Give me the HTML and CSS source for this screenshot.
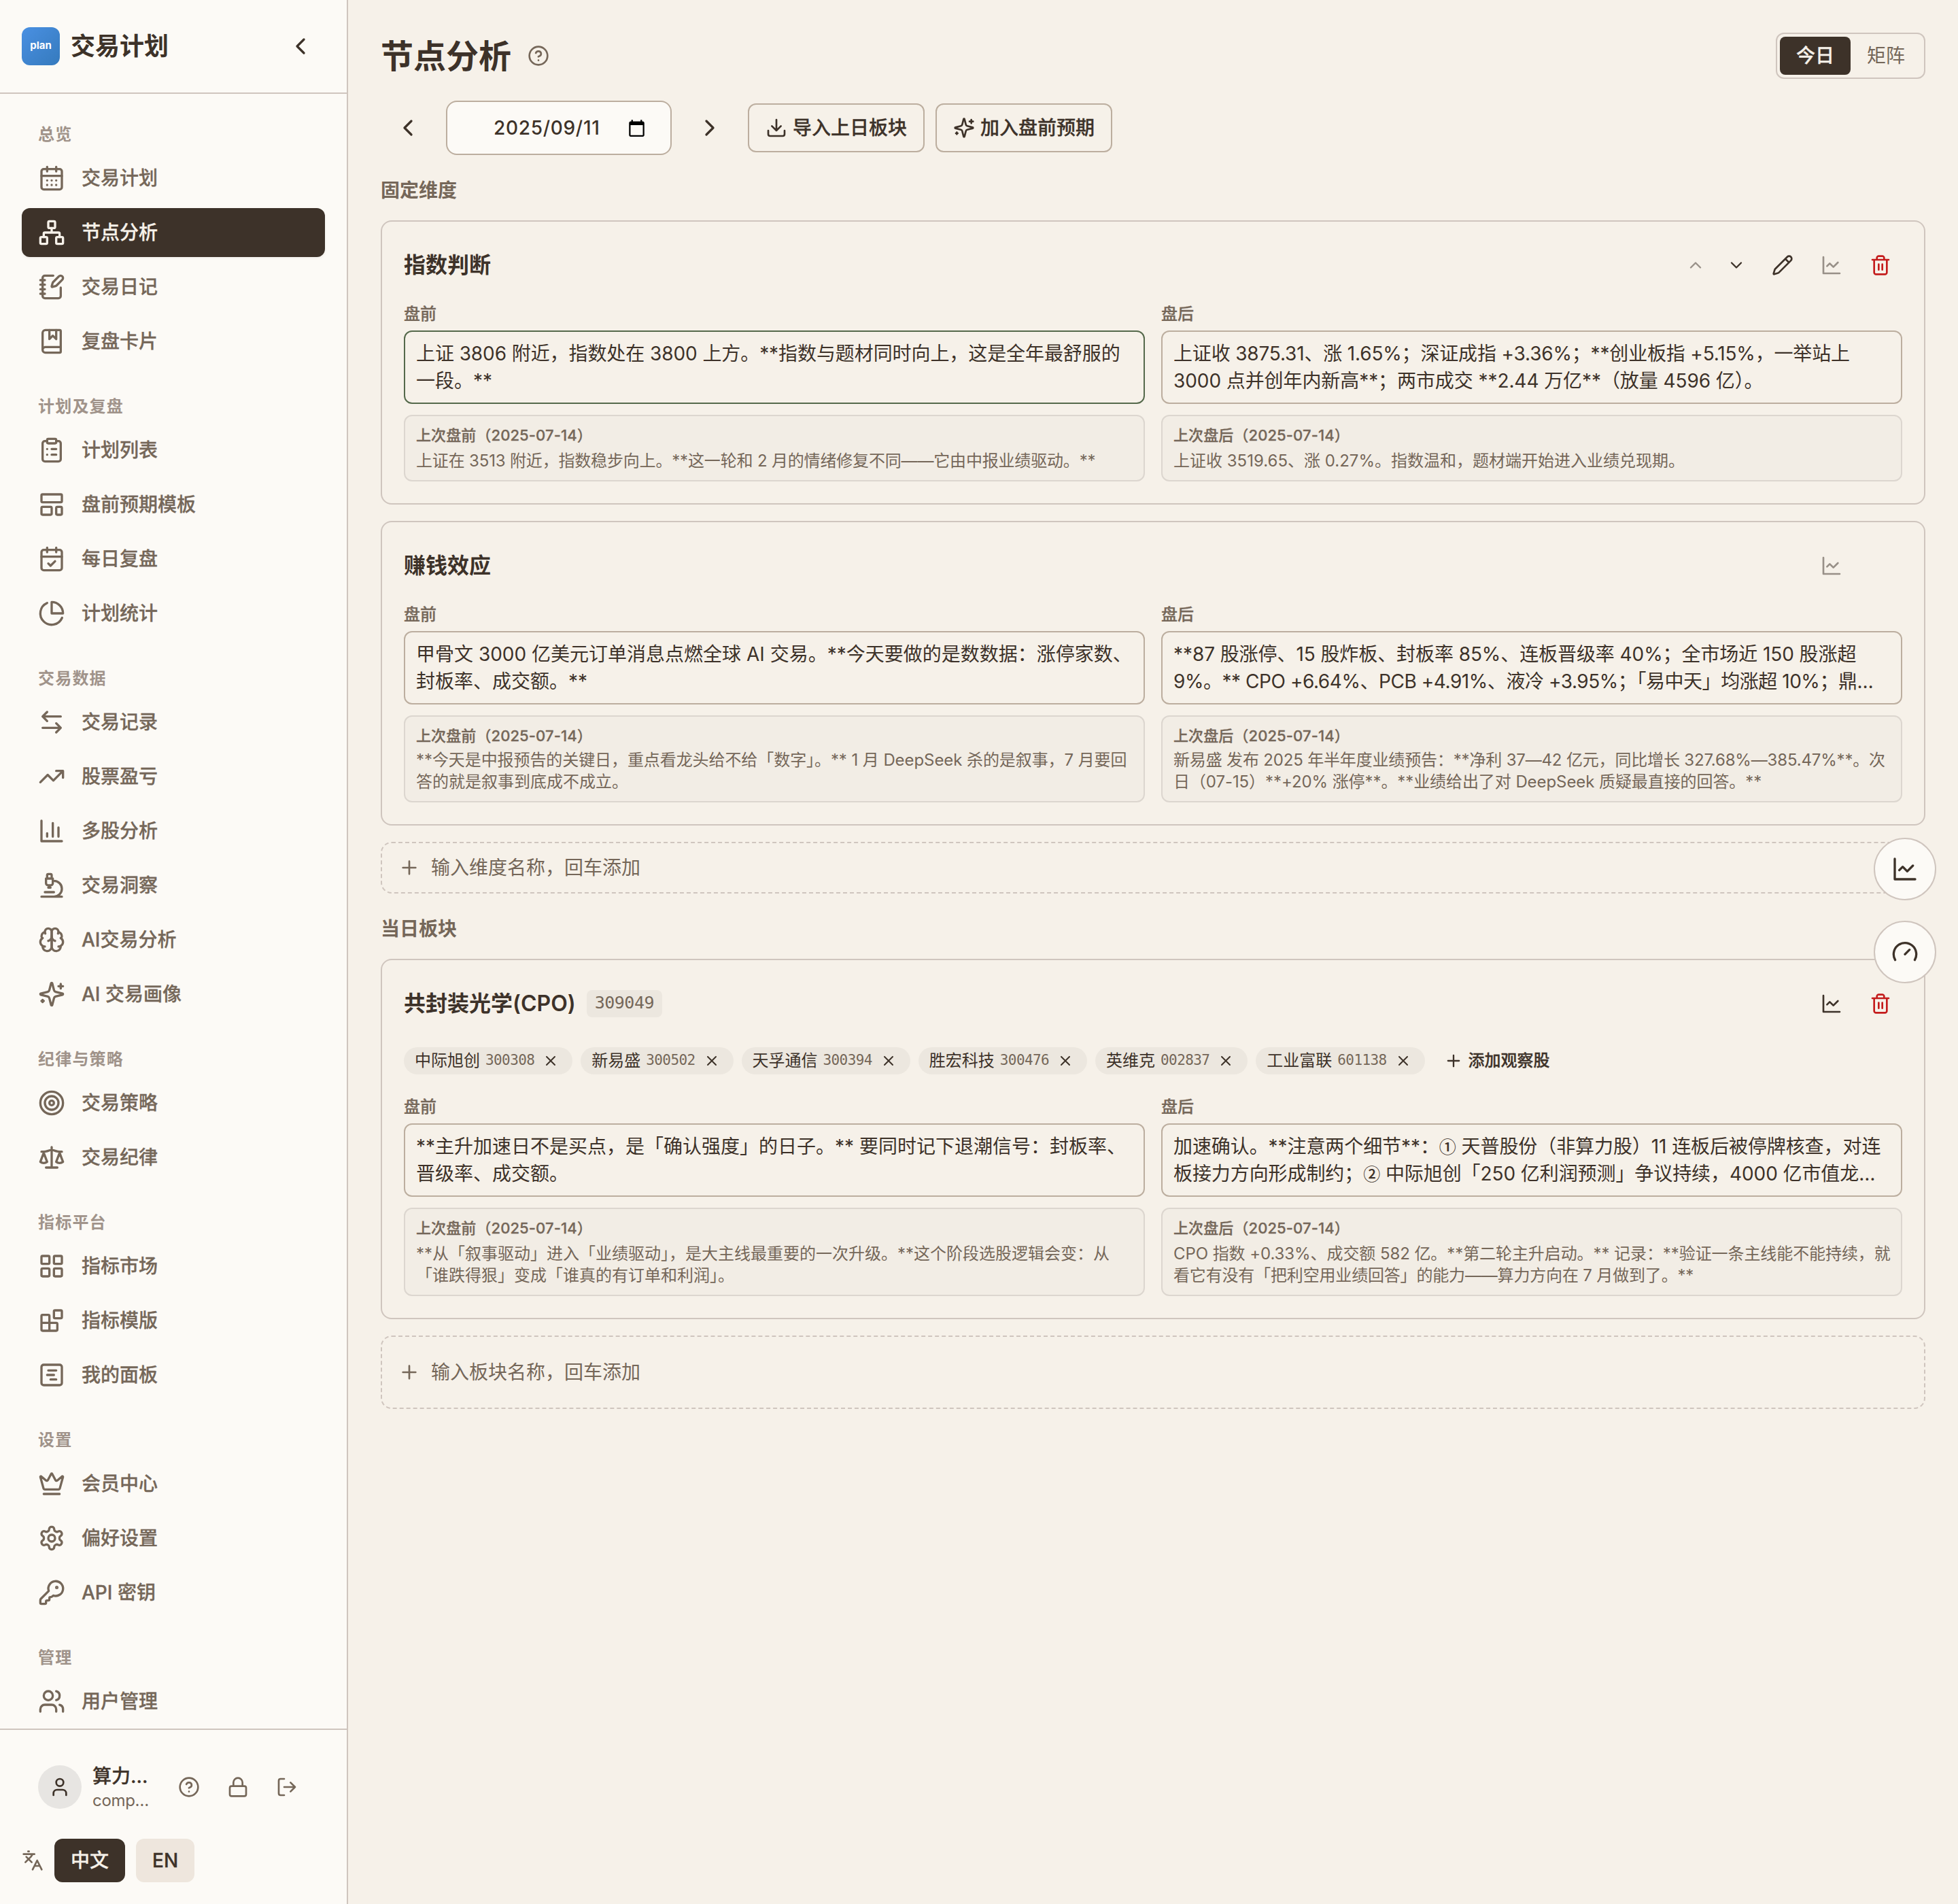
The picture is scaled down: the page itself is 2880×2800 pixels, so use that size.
FILE: index.html
```html
<!DOCTYPE html>
<html lang="zh-CN">
<head>
<meta charset="utf-8">
<title>交易计划 · 节点分析</title>
<link rel="stylesheet" href="styles.css">
</head>
<body>
<svg class="sprite" aria-hidden="true">
  <symbol id="calendar-days" viewBox="0 0 24 24"><path d="M8 2v4M16 2v4M3 10h18M8 14h.01M12 14h.01M16 14h.01M8 18h.01M12 18h.01M16 18h.01"/><rect width="18" height="18" x="3" y="4" rx="2"/></symbol>
  <symbol id="network" viewBox="0 0 24 24"><rect x="16" y="16" width="6" height="6" rx="1"/><rect x="2" y="16" width="6" height="6" rx="1"/><rect x="9" y="2" width="6" height="6" rx="1"/><path d="M5 16v-3a1 1 0 0 1 1-1h12a1 1 0 0 1 1 1v3M12 12V8"/></symbol>
  <symbol id="notebook-pen" viewBox="0 0 24 24"><path d="M13.4 2H6a2 2 0 0 0-2 2v16a2 2 0 0 0 2 2h12a2 2 0 0 0 2-2v-7.4M2 6h4M2 10h4M2 14h4M2 18h4"/><path d="M21.378 5.626a1 1 0 1 0-3.004-3.004l-5.01 5.012a2 2 0 0 0-.506.854l-.837 2.87a.5.5 0 0 0 .62.62l2.87-.837a2 2 0 0 0 .854-.506z"/></symbol>
  <symbol id="book-marked" viewBox="0 0 24 24"><path d="M10 2v8l3-3 3 3V2"/><path d="M4 19.5v-15A2.5 2.5 0 0 1 6.5 2H19a1 1 0 0 1 1 1v18a1 1 0 0 1-1 1H6.5a1 1 0 0 1 0-5H20"/></symbol>
  <symbol id="clipboard-list" viewBox="0 0 24 24"><rect width="8" height="4" x="8" y="2" rx="1"/><path d="M16 4h2a2 2 0 0 1 2 2v14a2 2 0 0 1-2 2H6a2 2 0 0 1-2-2V6a2 2 0 0 1 2-2h2M12 11h4M12 16h4M8 11h.01M8 16h.01"/></symbol>
  <symbol id="layout-template" viewBox="0 0 24 24"><rect width="18" height="7" x="3" y="3" rx="1"/><rect width="9" height="7" x="3" y="14" rx="1"/><rect width="5" height="7" x="16" y="14" rx="1"/></symbol>
  <symbol id="calendar-check" viewBox="0 0 24 24"><path d="M8 2v4M16 2v4M3 10h18M9 16l2 2 4-4"/><rect width="18" height="18" x="3" y="4" rx="2"/></symbol>
  <symbol id="pie-chart" viewBox="0 0 24 24"><path d="M21.21 15.89A10 10 0 1 1 8 2.83"/><path d="M22 12A10 10 0 0 0 12 2v10z"/></symbol>
  <symbol id="arrow-left-right" viewBox="0 0 24 24"><path d="M8 3 4 7l4 4M4 7h16M16 21l4-4-4-4M20 17H4"/></symbol>
  <symbol id="trending-up" viewBox="0 0 24 24"><path d="M22 7l-8.500 8.500-5-5L2 17M16 7h6v6"/></symbol>
  <symbol id="bar-chart" viewBox="0 0 24 24"><path d="M3 3v18h18M18 17V9M13 17V5M8 17v-3"/></symbol>
  <symbol id="microscope" viewBox="0 0 24 24"><path d="M6 18h8M3 22h18M14 22a7 7 0 1 0 0-14h-1M9 14h2M9 12a2 2 0 0 1-2-2V6h6v4a2 2 0 0 1-2 2ZM12 6V3a1 1 0 0 0-1-1H9a1 1 0 0 0-1 1v3"/></symbol>
  <symbol id="brain" viewBox="0 0 24 24"><path d="M12 5a3 3 0 1 0-5.997.125 4 4 0 0 0-2.526 5.770 4 4 0 0 0 .556 6.588A4 4 0 1 0 12 18Z"/><path d="M12 5a3 3 0 1 1 5.997.125 4 4 0 0 1 2.526 5.770 4 4 0 0 1-.556 6.588A4 4 0 1 1 12 18Z"/><path d="M15 13a4.500 4.500 0 0 1-3-4 4.500 4.500 0 0 1-3 4M17.599 6.500a3 3 0 0 0 .399-1.375M6.003 5.125A3 3 0 0 0 6.401 6.500M3.477 10.896a4 4 0 0 1 .585-.396M19.938 10.500a4 4 0 0 1 .585.396M6 18a4 4 0 0 1-1.967-.516M19.967 17.484A4 4 0 0 1 18 18"/></symbol>
  <symbol id="sparkles" viewBox="0 0 24 24"><path d="M9.937 15.5A2 2 0 0 0 8.5 14.063l-6.135-1.582a.5.5 0 0 1 0-.962L8.5 9.936A2 2 0 0 0 9.937 8.5l1.582-6.135a.5.5 0 0 1 .963 0L14.063 8.5A2 2 0 0 0 15.5 9.937l6.135 1.581a.5.5 0 0 1 0 .964L15.5 14.063a2 2 0 0 0-1.437 1.437l-1.582 6.135a.5.5 0 0 1-.963 0zM20 3v4M22 5h-4M4 17v2M5 18H3"/></symbol>
  <symbol id="target" viewBox="0 0 24 24"><circle cx="12" cy="12" r="10"/><circle cx="12" cy="12" r="6"/><circle cx="12" cy="12" r="2"/></symbol>
  <symbol id="scale" viewBox="0 0 24 24"><path d="m16 16 3-8 3 8c-.87.65-1.92 1-3 1s-2.130-.35-3-1ZM2 16l3-8 3 8c-.87.65-1.920 1-3 1s-2.130-.35-3-1ZM7 21h10M12 3v18M3 7h2c2 0 5-1 7-2 2 1 5 2 7 2h2"/></symbol>
  <symbol id="layout-grid" viewBox="0 0 24 24"><rect width="7" height="7" x="3" y="3" rx="1"/><rect width="7" height="7" x="14" y="3" rx="1"/><rect width="7" height="7" x="14" y="14" rx="1"/><rect width="7" height="7" x="3" y="14" rx="1"/></symbol>
  <symbol id="blocks" viewBox="0 0 24 24"><rect width="7" height="7" x="14" y="3" rx="1"/><path d="M10 21V8a1 1 0 0 0-1-1H4a1 1 0 0 0-1 1v12a1 1 0 0 0 1 1h12a1 1 0 0 0 1-1v-5a1 1 0 0 0-1-1H3"/></symbol>
  <symbol id="gantt" viewBox="0 0 24 24"><rect width="18" height="18" x="3" y="3" rx="2"/><path d="M9 8h7M8 12h6M11 16h5"/></symbol>
  <symbol id="crown" viewBox="0 0 24 24"><path d="M11.562 3.266a.5.5 0 0 1 .876 0L15.39 8.87a1 1 0 0 0 1.516.294L21.183 5.5a.5.5 0 0 1 .798.519l-2.834 10.246a1 1 0 0 1-.956.734H5.81a1 1 0 0 1-.957-.734L2.02 6.02a.5.5 0 0 1 .798-.519l4.276 3.664a1 1 0 0 0 1.516-.294zM5 21h14"/></symbol>
  <symbol id="settings" viewBox="0 0 24 24"><path d="M12.22 2h-.44a2 2 0 0 0-2 2v.18a2 2 0 0 1-1 1.73l-.43.25a2 2 0 0 1-2 0l-.15-.08a2 2 0 0 0-2.73.73l-.22.38a2 2 0 0 0 .73 2.73l.15.1a2 2 0 0 1 1 1.72v.51a2 2 0 0 1-1 1.74l-.15.09a2 2 0 0 0-.73 2.73l.22.38a2 2 0 0 0 2.73.73l.15-.08a2 2 0 0 1 2 0l.43.25a2 2 0 0 1 1 1.73V20a2 2 0 0 0 2 2h.44a2 2 0 0 0 2-2v-.18a2 2 0 0 1 1-1.73l.43-.25a2 2 0 0 1 2 0l.15.08a2 2 0 0 0 2.73-.73l.22-.39a2 2 0 0 0-.73-2.73l-.15-.08a2 2 0 0 1-1-1.74v-.5a2 2 0 0 1 1-1.74l.15-.09a2 2 0 0 0 .73-2.73l-.22-.38a2 2 0 0 0-2.73-.73l-.15.08a2 2 0 0 1-2 0l-.43-.25a2 2 0 0 1-1-1.73V4a2 2 0 0 0-2-2z"/><circle cx="12" cy="12" r="3"/></symbol>
  <symbol id="key" viewBox="0 0 24 24"><path d="M2.586 17.414A2 2 0 0 0 2 18.828V21a1 1 0 0 0 1 1h3a1 1 0 0 0 1-1v-1a1 1 0 0 1 1-1h1a1 1 0 0 0 1-1v-1a1 1 0 0 1 1-1h.172a2 2 0 0 0 1.414-.586l.814-.814a6.5 6.5 0 1 0-4-4z"/><circle cx="16.5" cy="7.5" r=".5" fill="currentColor"/></symbol>
  <symbol id="users" viewBox="0 0 24 24"><path d="M16 21v-2a4 4 0 0 0-4-4H6a4 4 0 0 0-4 4v2M22 21v-2a4 4 0 0 0-3-3.87M16 3.13a4 4 0 0 1 0 7.75"/><circle cx="9" cy="7" r="4"/></symbol>
  <symbol id="user" viewBox="0 0 24 24"><path d="M19 21v-2a4 4 0 0 0-4-4H9a4 4 0 0 0-4 4v2"/><circle cx="12" cy="7" r="4"/></symbol>
  <symbol id="help" viewBox="0 0 24 24"><circle cx="12" cy="12" r="10"/><path d="M9.09 9a3 3 0 0 1 5.83 1c0 2-3 3-3 3M12 17h.01"/></symbol>
  <symbol id="lock" viewBox="0 0 24 24"><rect width="18" height="11" x="3" y="11" rx="2"/><path d="M7 11V7a5 5 0 0 1 10 0v4"/></symbol>
  <symbol id="log-out" viewBox="0 0 24 24"><path d="M9 21H5a2 2 0 0 1-2-2V5a2 2 0 0 1 2-2h4M16 17l5-5-5-5M21 12H9"/></symbol>
  <symbol id="languages" viewBox="0 0 24 24"><path d="m5 8 6 6M4 14l6-6 2-3M2 5h12M7 2h1M22 22l-5-10-5 10M14 18h6"/></symbol>
  <symbol id="chevron-left" viewBox="0 0 24 24"><path d="m15 18-6-6 6-6"/></symbol>
  <symbol id="chevron-right" viewBox="0 0 24 24"><path d="m9 18 6-6-6-6"/></symbol>
  <symbol id="chevron-up" viewBox="0 0 24 24"><path d="m18 15-6-6-6 6"/></symbol>
  <symbol id="chevron-down" viewBox="0 0 24 24"><path d="m6 9 6 6 6-6"/></symbol>
  <symbol id="download" viewBox="0 0 24 24"><path d="M21 15v4a2 2 0 0 1-2 2H5a2 2 0 0 1-2-2v-4M7 10l5 5 5-5M12 15V3"/></symbol>
  <symbol id="pencil" viewBox="0 0 24 24"><path d="M21.174 6.812a1 1 0 0 0-3.986-3.987L3.842 16.174a2 2 0 0 0-.5.83l-1.321 4.352a.5.5 0 0 0 .623.622l4.353-1.320a2 2 0 0 0 .830-.497zM15 5l4 4"/></symbol>
  <symbol id="line-chart" viewBox="0 0 24 24"><path d="M3 3v18h18M19 9l-5 5-4-4-3 3"/></symbol>
  <symbol id="trash" viewBox="0 0 24 24"><path d="M3 6h18M19 6v14c0 1-1 2-2 2H7c-1 0-2-1-2-2V6M8 6V4c0-1 1-2 2-2h4c1 0 2 1 2 2v2M10 11v6M14 11v6"/></symbol>
  <symbol id="plus" viewBox="0 0 24 24"><path d="M5 12h14M12 5v14"/></symbol>
  <symbol id="x" viewBox="0 0 24 24"><path d="M18 6 6 18M6 6l12 12"/></symbol>
  <symbol id="gauge" viewBox="0 0 24 24"><path d="m12 14 4-4M3.340 19a10 10 0 1 1 17.320 0"/></symbol>
  <symbol id="date-picker" viewBox="0 0 24 24"><path fill="#000" stroke="none" d="M20 3h-1V1h-2v2H7V1H5v2H4c-1.100 0-2 .9-2 2v16c0 1.100.9 2 2 2h16c1.100 0 2-.9 2-2V5c0-1.100-.9-2-2-2zm0 18H4V8h16v13z"/></symbol>
</svg>

<div class="app">
  <aside class="sidebar">
    <header class="brand">
      <span class="logo">plan</span>
      <span class="brand-name">交易计划</span>
      <button class="collapse"><svg class="icon i40"><use href="#chevron-left"/></svg></button>
    </header>
    <nav class="nav">
      <h2 class="nav-label">总览</h2>
      <a class="nav-item"><svg class="icon i40"><use href="#calendar-days"/></svg>交易计划</a>
      <a class="nav-item active"><svg class="icon i40"><use href="#network"/></svg>节点分析</a>
      <a class="nav-item"><svg class="icon i40"><use href="#notebook-pen"/></svg>交易日记</a>
      <a class="nav-item"><svg class="icon i40"><use href="#book-marked"/></svg>复盘卡片</a>
      <h2 class="nav-label">计划及复盘</h2>
      <a class="nav-item"><svg class="icon i40"><use href="#clipboard-list"/></svg>计划列表</a>
      <a class="nav-item"><svg class="icon i40"><use href="#layout-template"/></svg>盘前预期模板</a>
      <a class="nav-item"><svg class="icon i40"><use href="#calendar-check"/></svg>每日复盘</a>
      <a class="nav-item"><svg class="icon i40"><use href="#pie-chart"/></svg>计划统计</a>
      <h2 class="nav-label">交易数据</h2>
      <a class="nav-item"><svg class="icon i40"><use href="#arrow-left-right"/></svg>交易记录</a>
      <a class="nav-item"><svg class="icon i40"><use href="#trending-up"/></svg>股票盈亏</a>
      <a class="nav-item"><svg class="icon i40"><use href="#bar-chart"/></svg>多股分析</a>
      <a class="nav-item"><svg class="icon i40"><use href="#microscope"/></svg>交易洞察</a>
      <a class="nav-item"><svg class="icon i40"><use href="#brain"/></svg>AI交易分析</a>
      <a class="nav-item"><svg class="icon i40"><use href="#sparkles"/></svg>AI 交易画像</a>
      <h2 class="nav-label">纪律与策略</h2>
      <a class="nav-item"><svg class="icon i40"><use href="#target"/></svg>交易策略</a>
      <a class="nav-item"><svg class="icon i40"><use href="#scale"/></svg>交易纪律</a>
      <h2 class="nav-label">指标平台</h2>
      <a class="nav-item"><svg class="icon i40"><use href="#layout-grid"/></svg>指标市场</a>
      <a class="nav-item"><svg class="icon i40"><use href="#blocks"/></svg>指标模版</a>
      <a class="nav-item"><svg class="icon i40"><use href="#gantt"/></svg>我的面板</a>
      <h2 class="nav-label">设置</h2>
      <a class="nav-item"><svg class="icon i40"><use href="#crown"/></svg>会员中心</a>
      <a class="nav-item"><svg class="icon i40"><use href="#settings"/></svg>偏好设置</a>
      <a class="nav-item"><svg class="icon i40"><use href="#key"/></svg>API 密钥</a>
      <h2 class="nav-label">管理</h2>
      <a class="nav-item"><svg class="icon i40"><use href="#users"/></svg>用户管理</a>
    </nav>
    <footer class="account">
      <div class="user-row">
        <span class="avatar"><svg class="icon i32"><use href="#user"/></svg></span>
        <div class="user-text"><div class="user-name">算力…</div><div class="user-mail">comp…</div></div>
        <div class="user-actions">
          <button><svg class="icon i32"><use href="#help"/></svg></button>
          <button><svg class="icon i32"><use href="#lock"/></svg></button>
          <button><svg class="icon i32"><use href="#log-out"/></svg></button>
        </div>
      </div>
      <div class="lang-row">
        <svg class="icon i32"><use href="#languages"/></svg>
        <button class="lang on">中文</button>
        <button class="lang">EN</button>
      </div>
    </footer>
  </aside>

  <main class="main">
    <header class="page-head">
      <h1>节点分析</h1>
      <svg class="icon i32 muted"><use href="#help"/></svg>
      <div class="toggle"><button class="on">今日</button><button>矩阵</button></div>
    </header>

    <div class="toolbar">
      <button class="step"><svg class="icon i40"><use href="#chevron-left"/></svg></button>
      <div class="date"><span>2025/09/11</span><svg class="picker"><use href="#date-picker"/></svg></div>
      <button class="step"><svg class="icon i40"><use href="#chevron-right"/></svg></button>
      <button class="btn"><svg class="icon i32"><use href="#download"/></svg>导入上日板块</button>
      <button class="btn"><svg class="icon i32"><use href="#sparkles"/></svg>加入盘前预期</button>
    </div>

    <h2 class="section-title">固定维度</h2>
    <div class="stack">
      <article class="card">
        <header class="card-head">
          <h3>指数判断</h3>
          <div class="actions">
            <div class="order">
              <button class="dim"><svg class="icon i28"><use href="#chevron-up"/></svg></button>
              <button><svg class="icon i28"><use href="#chevron-down"/></svg></button>
            </div>
            <button><svg class="icon i32"><use href="#pencil"/></svg></button>
            <button class="dim"><svg class="icon i32"><use href="#line-chart"/></svg></button>
            <button class="danger"><svg class="icon i32"><use href="#trash"/></svg></button>
          </div>
        </header>
        <div class="cols">
          <section>
            <h4>盘前</h4>
            <div class="note focus"><p class="t1">上证 3806 附近，指数处在 3800 上方。**指数与题材同时向上，这是全年最舒服的</p><p>一段。**</p></div>
            <div class="prev"><div class="prev-title">上次盘前（2025-07-14）</div><p class="t2">上证在 3513 附近，指数稳步向上。**这一轮和 2 月的情绪修复不同——它由中报业绩驱动。**</p></div>
          </section>
          <section>
            <h4>盘后</h4>
            <div class="note"><p class="t2">上证收 3875.31、涨 1.65%；深证成指 +3.36%；**创业板指 +5.15%，一举站上</p><p class="t1">3000 点并创年内新高**；两市成交 **2.44 万亿**（放量 4596 亿）。</p></div>
            <div class="prev"><div class="prev-title">上次盘后（2025-07-14）</div><p>上证收 3519.65、涨 0.27%。指数温和，题材端开始进入业绩兑现期。</p></div>
          </section>
        </div>
      </article>

      <article class="card">
        <header class="card-head">
          <h3>赚钱效应</h3>
          <div class="actions">
            <button class="dim"><svg class="icon i32"><use href="#line-chart"/></svg></button>
            <span class="slot"></span>
          </div>
        </header>
        <div class="cols">
          <section>
            <h4>盘前</h4>
            <div class="note"><p>甲骨文 3000 亿美元订单消息点燃全球 AI 交易。**今天要做的是数数据：涨停家数、</p><p>封板率、成交额。**</p></div>
            <div class="prev tight"><div class="prev-title">上次盘前（2025-07-14）</div><p class="t1">**今天是中报预告的关键日，重点看龙头给不给「数字」。** 1 月 DeepSeek 杀的是叙事，7 月要回</p><p>答的就是叙事到底成不成立。</p></div>
          </section>
          <section>
            <h4>盘后</h4>
            <div class="note"><p class="t1">**87 股涨停、15 股炸板、封板率 85%、连板晋级率 40%；全市场近 150 股涨超</p><p class="t4">9%。** CPO +6.64%、PCB +4.91%、液冷 +3.95%；「易中天」均涨超 10%；鼎…</p></div>
            <div class="prev tight"><div class="prev-title">上次盘后（2025-07-14）</div><p class="t2">新易盛 发布 2025 年半年度业绩预告：**净利 37—42 亿元，同比增长 327.68%—385.47%**。次</p><p class="t1">日（07-15）**+20% 涨停**。**业绩给出了对 DeepSeek 质疑最直接的回答。**</p></div>
          </section>
        </div>
      </article>

      <div class="add-row"><svg class="icon i32"><use href="#plus"/></svg>输入维度名称，回车添加</div>
    </div>

    <h2 class="section-title">当日板块</h2>
    <div class="stack">
      <article class="card">
        <header class="card-head">
          <h3>共封装光学(CPO)</h3>
          <span class="code-badge">309049</span>
          <div class="actions">
            <button><svg class="icon i32"><use href="#line-chart"/></svg></button>
            <button class="danger"><svg class="icon i32"><use href="#trash"/></svg></button>
          </div>
        </header>
        <div class="chips">
          <span class="chip">中际旭创<code>300308</code><svg class="icon i24"><use href="#x"/></svg></span>
          <span class="chip">新易盛<code>300502</code><svg class="icon i24"><use href="#x"/></svg></span>
          <span class="chip">天孚通信<code>300394</code><svg class="icon i24"><use href="#x"/></svg></span>
          <span class="chip">胜宏科技<code>300476</code><svg class="icon i24"><use href="#x"/></svg></span>
          <span class="chip">英维克<code>002837</code><svg class="icon i24"><use href="#x"/></svg></span>
          <span class="chip">工业富联<code>601138</code><svg class="icon i24"><use href="#x"/></svg></span>
          <button class="add-chip"><svg class="icon i28"><use href="#plus"/></svg>添加观察股</button>
        </div>
        <div class="cols">
          <section>
            <h4>盘前</h4>
            <div class="note"><p>**主升加速日不是买点，是「确认强度」的日子。** 要同时记下退潮信号：封板率、</p><p>晋级率、成交额。</p></div>
            <div class="prev"><div class="prev-title">上次盘前（2025-07-14）</div><p>**从「叙事驱动」进入「业绩驱动」，是大主线最重要的一次升级。**这个阶段选股逻辑会变：从</p><p>「谁跌得狠」变成「谁真的有订单和利润」。</p></div>
          </section>
          <section>
            <h4>盘后</h4>
            <div class="note"><p class="t1">加速确认。**注意两个细节**：<span class="num">①</span> 天普股份（非算力股）11 连板后被停牌核查，对连</p><p class="t1">板接力方向形成制约；<span class="num">②</span> 中际旭创「250 亿利润预测」争议持续，4000 亿市值龙…</p></div>
            <div class="prev"><div class="prev-title">上次盘后（2025-07-14）</div><p class="t1">CPO 指数 +0.33%、成交额 582 亿。**第二轮主升启动。** 记录：**验证一条主线能不能持续，就</p><p class="t2">看它有没有「把利空用业绩回答」的能力——算力方向在 7 月做到了。**</p></div>
          </section>
        </div>
      </article>

      <div class="add-row tall"><svg class="icon i32"><use href="#plus"/></svg>输入板块名称，回车添加</div>
    </div>
  </main>

  <div class="floaters">
    <button><svg class="icon i40"><use href="#line-chart"/></svg></button>
    <button><svg class="icon i40"><use href="#gauge"/></svg></button>
  </div>
</div>
</body>
</html>
```
FILE: styles.css
```css
:root {
  --bg: #f6f1e9;
  --panel: #fcfaf6;
  --ink: #3d3229;
  --muted: #756759;
  --faint: #a0938a;
  --line: #cfc5be;
  --field: #bcae9f;
  --mono: "DejaVu Sans Mono", monospace;
}
* { box-sizing: border-box; margin: 0; padding: 0; }
body {
  background: var(--bg);
  color: var(--ink);
  font: 400 28px/40px Inter, "Noto Sans CJK SC", sans-serif;
}
button { border: 0; background: none; color: inherit; font: inherit; display: flex; align-items: center; justify-content: center; }
.sprite { display: none; }
.icon { flex: none; display: block; fill: none; stroke: currentColor; stroke-width: 2; stroke-linecap: round; stroke-linejoin: round; }
.i24 { width: 24px; height: 24px; }
.i28 { width: 28px; height: 28px; }
.i32 { width: 32px; height: 32px; }
.i40 { width: 40px; height: 40px; }
.muted { color: var(--muted); }

/* Medium-weight text gets a hairline stroke so the Chinese glyphs carry the weight too */
.nav-item, .user-name, .lang, .btn, .toggle .on, .cols h4, .prev-title, .add-chip { font-weight: 500; -webkit-text-stroke: .3px currentColor; }

.app { display: flex; width: 2880px; height: 2800px; position: relative; overflow: hidden; }

/* Sidebar */
.sidebar { flex: none; width: 512px; display: flex; flex-direction: column; background: var(--panel); border-right: 2px solid var(--line); }
.brand { flex: none; height: 138px; display: flex; align-items: center; padding: 0 32px; border-bottom: 2px solid var(--line); }
.logo { width: 56px; height: 56px; margin-right: 16px; border-radius: 12px; background: linear-gradient(135deg, #4a90e2, #357abd); color: #fff; font: 700 15px/54px Inter, sans-serif; text-align: center; }
.brand-name { font-size: 36px; font-weight: 700; }
.collapse { width: 72px; height: 72px; margin-left: auto; }
.nav { flex: 1; min-height: 0; overflow: hidden; padding: 0 32px; display: flex; flex-direction: column; }
.nav-label { flex: none; height: 88px; padding: 44px 24px 0; font-size: 24px; line-height: 32px; font-weight: 600; letter-spacing: 1.2px; color: var(--faint); }
.nav-item { flex: none; height: 72px; margin-bottom: 8px; padding: 0 24px; display: flex; align-items: center; gap: 24px; border-radius: 12px; color: var(--muted); }
.nav-item + .nav-label { margin-top: -8px; }
.nav-item.active { background: var(--ink); color: var(--bg); box-shadow: 0 2px 4px rgba(0, 0, 0, .05); }
.account { flex: none; height: 258px; padding: 32px; border-top: 2px solid var(--line); }
.user-row { height: 104px; padding: 0 24px; margin-bottom: 24px; display: flex; align-items: center; }
.avatar { flex: none; width: 64px; height: 64px; border-radius: 50%; background: #e7e5e2; display: flex; align-items: center; justify-content: center; }
.user-text { width: 86px; margin-left: 16px; white-space: nowrap; }
.user-mail { font-size: 24px; line-height: 32px; letter-spacing: -.3px; color: var(--muted); }
.user-actions { display: flex; gap: 8px; margin-left: 24px; color: var(--muted); }
.user-actions button { width: 64px; height: 64px; }
.lang-row { display: flex; align-items: center; gap: 16px; color: var(--muted); }
.lang { height: 64px; padding: 0 24px; border-radius: 12px; background: #eee6dd; color: var(--ink); }
.lang.on { background: var(--ink); color: var(--bg); }

/* Page */
.main { flex: 1; min-width: 0; padding: 48px; }
.page-head { height: 68px; display: flex; align-items: center; gap: 24px; }
.page-head h1 { padding-top: 2px; font-size: 48px; line-height: 64px; font-weight: 700; }
.toggle { margin-left: auto; display: flex; padding: 4px; border: 2px solid var(--line); border-radius: 12px; }
.toggle button { width: 104px; height: 56px; border-radius: 8px; color: var(--muted); }
.toggle .on { background: var(--ink); color: var(--bg); }
.toolbar { height: 80px; margin-top: 32px; display: flex; align-items: center; gap: 16px; }
.step { width: 80px; height: 72px; }
.date { width: 332px; height: 80px; padding: 0 36px 0 68px; display: flex; align-items: center; justify-content: space-between; border: 2px solid var(--field); border-radius: 16px; background: var(--panel); font-weight: 500; letter-spacing: .7px; }
.picker { width: 27px; height: 27px; }
.btn { height: 72px; padding: 0 24px; gap: 8px; border: 2px solid var(--field); border-radius: 12px; }
.section-title { margin: 32px 0 24px; font-size: 28px; line-height: 40px; font-weight: 600; color: var(--muted); }
.stack { display: flex; flex-direction: column; gap: 24px; }

/* Cards */
.card { padding: 32px; border: 2px solid var(--line); border-radius: 16px; display: flex; flex-direction: column; }
.card-head { height: 64px; display: flex; align-items: center; }
.card-head h3 { font-size: 32px; font-weight: 600; }
.actions { margin-left: auto; display: flex; gap: 8px; }
.actions button, .slot { width: 64px; height: 64px; }
.order { display: flex; gap: 4px; }
.order button { width: 56px; }
.dim { opacity: .5; }
.danger { color: #c41c1c; }
.cols { margin-top: 24px; display: grid; grid-template-columns: repeat(2, minmax(0, 1fr)); gap: 24px; white-space: nowrap; }
.cols h4 { margin-bottom: 8px; font-size: 24px; line-height: 32px; color: var(--muted); }
.note { height: 108px; padding: 12px 16px; border: 2px solid var(--field); border-radius: 12px; }
.note.focus { border-color: #55694b; }
.prev { margin-top: 16px; padding: 12px 16px; border: 2px solid #dcd6cf; border-radius: 12px; background: #f2ede5; color: var(--muted); font-size: 24px; line-height: 32px; }
.prev-title { height: 32px; margin-bottom: 6px; font-size: 22px; letter-spacing: .1px; }
.prev p { height: 32px; }
.note p { height: 40px; }
.tight .prev-title { margin-bottom: 4px; }
.num { font-family: "Noto Sans CJK SC", sans-serif; font-size: 25px; font-weight: 500; line-height: 1; }

/* Letter-fit steps for dense note lines */
.t1 { letter-spacing: -.08px; }
.t2 { letter-spacing: -.17px; }
.t4 { letter-spacing: -.45px; }

.code-badge { height: 40px; margin-left: 16px; padding: 0 12px; border-radius: 8px; background: #ece7df; color: var(--muted); font: 25px/38px var(--mono); letter-spacing: -.5px; }
.chips { margin: 32px 0 8px; display: flex; gap: 12px; font-size: 24px; }
.chip { height: 40px; padding: 0 20px 0 16px; border-radius: 20px; background: #ece7df; display: flex; align-items: center; }
.chip code { margin: 0 12px 2px 8px; font: 21px/38px var(--mono); letter-spacing: -.6px; color: var(--muted); }
.add-chip { height: 40px; padding: 0 16px; gap: 8px; }
.add-row { height: 76px; padding: 0 24px; display: flex; align-items: center; gap: 16px; border: 2px dashed var(--line); border-radius: 16px; color: var(--muted); }
.add-row.tall { height: 108px; }

/* Quick-access buttons floating over the page edge */
.floaters { position: absolute; right: 32px; top: 1232px; display: flex; flex-direction: column; gap: 30px; }
.floaters button { width: 92px; height: 92px; border: 2px solid var(--line); border-radius: 50%; background: var(--panel); }
```
